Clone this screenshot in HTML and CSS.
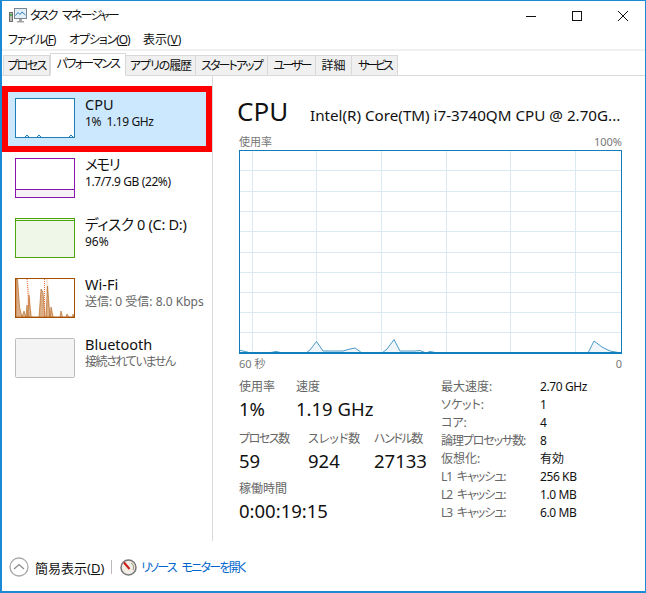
FILE: index.html
```html
<!DOCTYPE html>
<html lang="ja">
<head>
<meta charset="utf-8">
<title>タスク マネージャー</title>
<link rel="stylesheet" href="styles.css">
</head>
<body>
<div class="window">
  <header class="titlebar">
    <svg class="app-icon" width="18" height="17" viewBox="0 0 18 17">
      <rect x="0.500" y="5.500" width="3" height="9" fill="#b9bdb6" stroke="#6e6e6e"/>
      <rect x="1" y="7" width="2" height="2" fill="#4caf50"/>
      <rect x="5.500" y="1.500" width="12" height="10" fill="#e3eff8" stroke="#7b8790"/>
      <path d="M6.500 8.500 L9 5.500 L11 7.500 L13 5 L16.500 8" fill="none" stroke="#2f7fb8"/>
      <path d="M10 12 h3 v2 h2 v1.500 h-7 v-1.500 h2z" fill="#a4a4a4"/>
    </svg>
    <span class="title-text">タスク マネージャー</span>
    <div class="win-controls">
      <svg width="12" height="12" viewBox="0 0 12 12"><path d="M1 6.500 H11" stroke="#111" fill="none"/></svg>
      <svg width="12" height="12" viewBox="0 0 12 12"><rect x="1.500" y="1.500" width="9" height="9" stroke="#111" fill="none"/></svg>
      <svg width="12" height="12" viewBox="0 0 12 12"><path d="M1 1 L11 11 M11 1 L1 11" stroke="#111" fill="none"/></svg>
    </div>
  </header>
  <nav class="menubar">
    <span class="m1">ファイル(<u>F</u>)</span>
    <span class="m2">オプション(<u>O</u>)</span>
    <span>表示(<u>V</u>)</span>
  </nav>
  <div class="tabs">
    <span class="tab t1">プロセス</span>
    <span class="tab t2 active">パフォーマンス</span>
    <span class="tab t3">アプリの履歴</span>
    <span class="tab t4">スタートアップ</span>
    <span class="tab t5">ユーザー</span>
    <span class="tab t6">詳細</span>
    <span class="tab t7">サービス</span>
  </div>
  <div class="content">
    <aside class="sidebar">
      <div class="card selected">
        <svg class="thumb" width="60" height="40" viewBox="0 0 60 40">
          <rect x="0.500" y="0.500" width="59" height="39" fill="#fff" stroke="#1f7fb5"/>
          <path d="M10 39 l2 -2 l2 2 M22 39 l2 -2 l2 2 M54 39 l2 -2 l2 2" fill="#dcebf5" stroke="#1f7fb5"/>
        </svg>
        <div class="card-text">
          <div class="card-name">CPU</div>
          <div class="card-sub latin">1%&nbsp; 1.19 GHz</div>
        </div>
      </div>
      <div class="card">
        <svg class="thumb" width="60" height="40" viewBox="0 0 60 40">
          <rect x="0.500" y="0.500" width="59" height="39" fill="#fff" stroke="#8b12ae"/>
          <rect x="0.500" y="31.500" width="59" height="8" fill="#f4f2f4" stroke="#8b12ae"/>
        </svg>
        <div class="card-text">
          <div class="card-name name-memory">メモリ</div>
          <div class="card-sub latin">1.7/7.9 GB (22%)</div>
        </div>
      </div>
      <div class="card">
        <svg class="thumb" width="60" height="40" viewBox="0 0 60 40">
          <rect x="0.500" y="0.500" width="59" height="39" fill="#eff7e9" stroke="#4da60c"/>
          <path d="M1 2.500 H59" stroke="#4da60c" fill="none"/>
        </svg>
        <div class="card-text">
          <div class="card-name name-disk">ディスク 0 (C: D:)</div>
          <div class="card-sub">96%</div>
        </div>
      </div>
      <div class="card">
        <svg class="thumb" width="60" height="40" viewBox="0 0 60 40">
          <rect x="0.500" y="0.500" width="59" height="39" fill="#fff" stroke="#a74f01"/>
          <path d="M1 39 L1 1 L3 1 L5 30 L7 39 L11 39 L12 20 L13 1 L16 30 L18 39 L24 39 L26 12 L28 39 L30 39 L31 1 L33 1 L35 39 L37 28 L39 39 Z" fill="#f8e9dc"/>
          <path d="M1 39 L1 1 L2.500 1 L4.500 29 L7 39 L9 33 L11 39 L12 27 L13 39 L14 17 L16 39 L24 39 L26 11 L28 14 L30 39 L31 39 L32.500 8 L35 39 L36 29 L38 39 L45 39 L46 33 L47.500 39 L51 39 L52 36 L54 39 L57.500 39 L58 36 L59 39 Z" fill="#dcae86" stroke="#a74f01" stroke-width="0.500"/>
          <path d="M12 1 L14 28 M29.500 1 V38" stroke="#e8703f" stroke-dasharray="1 1" fill="none"/>
          <rect x="0.500" y="0.500" width="59" height="39" fill="none" stroke="#a74f01"/>
        </svg>
        <div class="card-text">
          <div class="card-name">Wi-Fi</div>
          <div class="card-sub muted">送信: 0 受信: 8.0 Kbps</div>
        </div>
      </div>
      <div class="card">
        <svg class="thumb" width="60" height="40" viewBox="0 0 60 40">
          <rect x="0.500" y="0.500" width="59" height="39" rx="1" fill="#f4f4f4" stroke="#bcbcbc"/>
        </svg>
        <div class="card-text">
          <div class="card-name">Bluetooth</div>
          <div class="card-sub muted tight">接続されていません</div>
        </div>
      </div>
    </aside>
    <main class="detail">
      <div class="head">
        <span class="head-name">CPU</span>
        <span class="head-model">Intel(R) Core(TM) i7-3740QM CPU @ 2.70G...</span>
      </div>
      <div class="axis axis-top"><span>使用率</span><span>100%</span></div>
      <svg class="chart" width="383" height="204" viewBox="0 0 383 204">
        <rect x="0" y="0" width="383" height="204" fill="#fff"/>
        <path d="M13.500 0 V204 M77.500 0 V204 M142.500 0 V204 M207.500 0 V204 M271.500 0 V204 M336.500 0 V204" stroke="#d9eaf4" fill="none"/>
        <path d="M0 20.500 H383 M0 41.500 H383 M0 61.500 H383 M0 81.500 H383 M0 102.500 H383 M0 122.500 H383 M0 142.500 H383 M0 162.500 H383 M0 182.500 H383" stroke="#d9eaf4" fill="none"/>
        <path class="area" d="M0 200 L12 203 L29 203 L37 201.500 L44 203 L67 203 L71 200 L77.500 191.500 L84 201 L104 201 L109 199.500 L116 198 L123 203 L143 203 L148 199 L155 189.500 L161 201 L176 201 L181 200.500 L187 203 L191 201.500 L199 203 L349 203 L355 191 L363 197 L371 201 L382 203 L0 203 Z"/>
        <rect x="0.500" y="0.500" width="382" height="203" fill="none" stroke="#117dbb"/>
        <path d="M0 203 H383" stroke="#117dbb" stroke-width="2" fill="none"/>
      </svg>
      <div class="axis axis-bottom"><span>60 秒</span><span>0</span></div>
      <div class="stats">
        <div class="live">
          <div class="row">
            <div class="stat s-usage"><div class="label">使用率</div><div class="value">1%</div></div>
            <div class="stat"><div class="label">速度</div><div class="value">1.19 GHz</div></div>
          </div>
          <div class="row">
            <div class="stat s-proc"><div class="label tight">プロセス数</div><div class="value">59</div></div>
            <div class="stat s-thread"><div class="label">スレッド数</div><div class="value">924</div></div>
            <div class="stat"><div class="label tight">ハンドル数</div><div class="value">27133</div></div>
          </div>
          <div class="row">
            <div class="stat"><div class="label">稼働時間</div><div class="value">0:00:19:15</div></div>
          </div>
        </div>
        <dl class="specs">
          <dt>最大速度:</dt><dd class="latin">2.70 GHz</dd>
          <dt>ソケット:</dt><dd>1</dd>
          <dt>コア:</dt><dd>4</dd>
          <dt class="tight-s">論理プロセッサ数:</dt><dd>8</dd>
          <dt>仮想化:</dt><dd>有効</dd>
          <dt class="tight-s">L1 キャッシュ:</dt><dd class="latin">256 KB</dd>
          <dt class="tight-s">L2 キャッシュ:</dt><dd class="latin">1.0 MB</dd>
          <dt class="tight-s">L3 キャッシュ:</dt><dd class="latin">6.0 MB</dd>
        </dl>
      </div>
    </main>
  </div>
  <footer class="footer">
    <svg class="collapse" width="20" height="20" viewBox="0 0 20 20">
      <circle cx="10" cy="10" r="9" fill="#fff" stroke="#a8a8a8" stroke-width="1.300"/>
      <path d="M5 12 L10 7.500 L15 12" fill="none" stroke="#8a8a8a" stroke-width="1.300"/>
    </svg>
    <span class="fewer">簡易表示(<u>D</u>)</span>
    <span class="sep"></span>
    <svg class="gauge" width="17" height="17" viewBox="0 0 17 17">
      <circle cx="8.500" cy="8.500" r="7.500" fill="#f0ede4" stroke="#777" stroke-width="1.500"/>
      <path d="M4 3.500 L9.500 10" stroke="#d01818" stroke-width="2" fill="none"/>
      <path d="M11 4 A5 5 0 0 1 13 11" stroke="#9a8f7d" fill="none"/>
    </svg>
    <a class="monitor-link">リソース モニターを開く</a>
  </footer>
</div>
</body>
</html>
```

FILE: styles.css
```css
* { box-sizing: border-box; }
html, body { margin: 0; padding: 0; background: #fff; }
body { font-family: "Noto Sans", "Noto Sans CJK JP", sans-serif; color: #111; font-feature-settings: "palt"; }
.window {
  width: 646px;
  height: 593px;
  display: flex;
  flex-direction: column;
  border: 1px solid #1a8ad4;
  border-left-width: 2px;
  border-bottom-width: 2px;
  overflow: hidden;
  background: #fff;
}
.titlebar { height: 29px; display: flex; align-items: center; padding-left: 7px; flex: none; }
.app-icon { flex: none; }
.title-text { font-size: 12px; margin-left: 3px; line-height: 16px; letter-spacing: -1.800px; word-spacing: 4px; }
.win-controls { margin-left: auto; display: flex; gap: 34px; padding-right: 16px; }
.menubar { height: 19px; display: flex; padding-left: 6px; font-size: 12px; line-height: 22px; flex: none; align-items: center; }
.m1 { width: 61px; letter-spacing: -1.100px; }
.m2 { width: 74px; letter-spacing: -1.100px; }
.tabs {
  height: 27px;
  flex: none;
  display: flex;
  align-items: flex-end;
  padding-left: 1px;
  border-top: 2px solid #f0f0f0;
  border-bottom: 1px solid #d9d9d9;
}
.tab {
  height: 21px;
  margin-bottom: -1px;
  background: #f0f0f0;
  border: 1px solid #d9d9d9;
  border-left-width: 0;
  font-size: 12px;
  line-height: 19px;
  text-align: center;
  white-space: nowrap;
}
.tab.active { height: 23px; background: #fff; border-bottom-color: #fff; border-left-width: 1px; line-height: 20px; }
.t1 { width: 47px; border-left-width: 1px; letter-spacing: -1.700px; }
.t2 { width: 76px; letter-spacing: -1.700px; }
.t3 { width: 70px; letter-spacing: -1.100px; }
.t4 { width: 72px; letter-spacing: -1.900px; }
.t5 { width: 48px; letter-spacing: -2.500px; }
.t6 { width: 36px; }
.t7 { width: 46px; letter-spacing: -3px; }
.content { flex: 1; display: flex; min-height: 0; }
.sidebar { width: 211px; flex: none; border-right: 1px solid #d9d9d9; padding-top: 10px; }
.card { height: 60px; display: flex; align-items: flex-start; padding: 6px 0 0 13px; }
.card.selected { height: 66px; background: #cce8ff; border: 6px solid #f00; padding: 6px 0 0 7px; width: 210px; }
.thumb { flex: none; display: block; }
.card-text { margin-left: 10px; margin-top: -4px; white-space: nowrap; }
.card-name { font-size: 14.500px; line-height: 20px; }
.name-memory { letter-spacing: -1.300px; }
.name-disk { letter-spacing: -0.300px; }
.card-sub { font-size: 12px; line-height: 16px; }
.latin { letter-spacing: -0.400px; }
.tight { letter-spacing: -1.400px; }
.tight-s { letter-spacing: -1.100px; word-spacing: 3px; }
.muted { color: #666; }
.detail { flex: 1; min-width: 0; padding: 0 0 0 26px; }
.head { height: 60px; display: flex; align-items: baseline; padding-top: 18px; white-space: nowrap; }
.head-name { font-size: 26px; line-height: 34px; width: 73px; margin-left: -2px; }
.head-model { font-size: 15.200px; }
.axis { display: flex; justify-content: space-between; width: 383px; font-size: 11px; color: #777; }
.axis-top { height: 14px; line-height: 12px; }
.axis-bottom { height: 16px; margin-top: 2px; line-height: 16px; }
.chart { display: block; }
.stats { display: flex; margin-top: 7px; }
.live { width: 202px; flex: none; }
.row { display: flex; height: 52px; }
.row + .row { height: 50px; }
.stat { white-space: nowrap; }
.s-usage { width: 57px; }
.s-proc { width: 69px; }
.s-thread { width: 66px; }
.label { font-size: 12px; color: #666; line-height: 16px; margin-bottom: 1px; }
.value { font-size: 18.500px; line-height: 26px; }
.specs { margin: -1px 0 0; display: grid; grid-template-columns: 99px auto; grid-auto-rows: 18px; font-size: 12px; line-height: 18px; }
.specs dt { color: #666; white-space: nowrap; }
.specs dd { margin: 0; white-space: nowrap; }
.footer { height: 50px; flex: none; display: flex; align-items: center; padding: 2px 0 0 7px; }
.fewer { font-size: 13px; margin-left: 6px; width: 76px; white-space: nowrap; }
.sep { width: 1px; height: 14px; background: #bbb; }
.gauge { margin-left: 8px; }
.monitor-link { font-size: 12px; color: #0066cc; margin-left: 4px; letter-spacing: -1.700px; word-spacing: 4px; }
.area { fill: #f1f6fa; stroke: #4a9ac9; stroke-width: 1; }
```
